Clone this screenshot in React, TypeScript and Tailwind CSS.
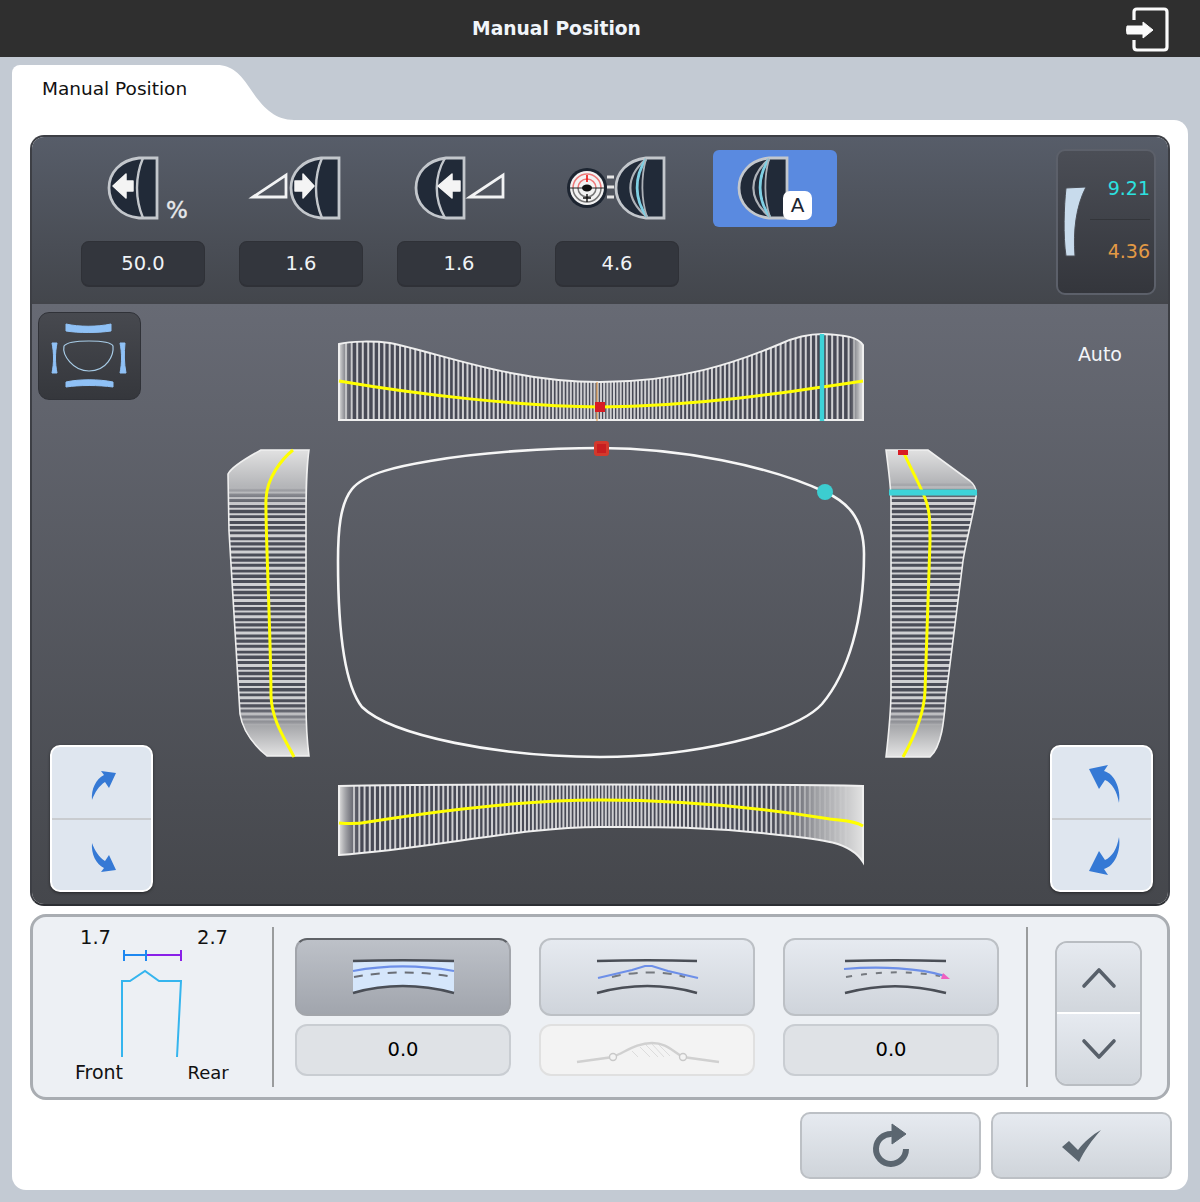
import React from "react";

// strip line positions, tighter near the middle of the lens
const topLines: number[] = [];
for (let x = 346; x < 860; x += 3.2 + 2.5 * (Math.abs(x - 600) / 260)) topLines.push(x);
const bottomLines: number[] = [];
for (let x = 354; x < 850; x += 3.4 + 2 * (Math.abs(x - 600) / 260)) bottomLines.push(x);
const sideLines: number[] = [];
for (let y = 470; y < 745; y += 5.4) sideLines.push(y);

const LensIcon = ({ x, arc = 35, bend = 8, cyan }: { x: number; arc?: number; bend?: number; cyan?: boolean }) => (
  <g transform={`translate(${x} 7)`}>
    <path d="M49 1 H31 C12 3 1 16 1 31 C1 46 12 59 31 61 H49 Z" fill="#212a38" stroke="#c3c7cc" strokeWidth="2.8" />
    {cyan ? (
      <>
        <path d="M31 2 C10 20 10 42 32 60" fill="none" stroke="#aeb2b8" strokeWidth="2.2" />
        <path d="M31 2 C19 20 19 42 32 60" fill="none" stroke="#7fd0e4" strokeWidth="2.8" />
        <path d="M31 2 C26 20 26 42 32 60" fill="none" stroke="#aeb2b8" strokeWidth="1.8" />
      </>
    ) : (
      <path d={`M${arc} 1 C${arc - bend} 20 ${arc - bend} 42 ${arc} 61`} fill="none" stroke="#c3c7cc" strokeWidth="2.4" />
    )}
  </g>
);

const WedgeIcon = ({ x }: { x: number }) => (
  <path d={`M${x + 1} 47 L${x + 34} 25 V47 Z`} fill="none" stroke="#f2f3f4" strokeWidth="2.8" strokeLinejoin="miter" />
);

const ValueBox = ({ value }: { value: string }) => (
  <div className="flex h-[46px] w-[124px] items-center justify-center rounded-[8px] border border-[#2f3137] border-b-2 bg-[#33363d] text-[19.5px] text-[#f0f3f6]">
    {value}
  </div>
);

const ToolColumn = ({ value, active, children }: { value?: string; active?: boolean; children: React.ReactNode }) => (
  <div className="flex w-[124px] flex-col gap-[14px]">
    <div className={`h-[77px] w-[124px] rounded-[6px] ${active ? "bg-[#5a8ae0]" : ""}`}>
      <svg width="124" height="77" viewBox="0 0 124 77">
        {children}
      </svg>
    </div>
    {value && <ValueBox value={value} />}
  </div>
);

const RotateButton = ({ top, flipSum }: { top: string; flipSum: number }) => (
  <div className="flex h-[147px] w-[103px] flex-col overflow-hidden rounded-[10px] border-2 border-white bg-[#dfe6ef] shadow-[0_1px_3px_rgba(0,0,0,0.5)]">
    <div className="flex-1 border-b-2 border-[#c9ccd0]">
      <svg width="99" height="71" viewBox="0 0 99 71">
        <path d={top} fill="#3579d5" />
      </svg>
    </div>
    <div className="flex-1">
      <svg width="99" height="71" viewBox="0 0 99 71">
        <g transform={`translate(0 ${flipSum}) scale(1 -1)`}>
          <path d={top} fill="#3579d5" />
        </g>
      </svg>
    </div>
  </div>
);

const LensDrawing = () => (
  <svg width="800" height="603" viewBox="200 303 800 603" className="shrink-0">
    <defs>
      <clipPath id="clipTop">
        <path d="M339 343 C350 340 375 340 390 342 C440 352 510 381 600 381 C680 381 735 362 780 343 C795 336 810 333 823 333 C845 334 858 336 863 344 V419 H339 Z" />
      </clipPath>
      <clipPath id="clipBottom">
        <path d="M339 785 C420 783 780 783 863 785 V861 C850 840 820 838 770 833 C700 825 650 826 600 826 C520 826 430 848 339 854 Z" />
      </clipPath>
      <clipPath id="clipLeft">
        <path d="M261 449 H309 C306 470 306 490 306 520 V700 C306 725 307 740 309 755 H267 C255 745 243 732 240 713 L229 530 L228 473 C232 465 250 455 261 449 Z" />
      </clipPath>
      <clipPath id="clipRight">
        <path d="M886 449 H928 L970 480 C975 484 977 490 976 496 C972 520 966 540 963 560 L946 695 C944 720 942 745 930 756 H886 C889 730 891 710 891 690 V500 C891 485 888 465 886 449 Z" />
      </clipPath>
      <linearGradient id="fadeTop" x1="0" y1="0" x2="0" y2="1">
        <stop offset="0" stopColor="#e6e6e6" />
        <stop offset="0.65" stopColor="#b4b5b8" />
        <stop offset="1" stopColor="#a0a1a6" stopOpacity="0" />
      </linearGradient>
      <linearGradient id="fadeBottom" x1="0" y1="1" x2="0" y2="0">
        <stop offset="0" stopColor="#e8e8e8" />
        <stop offset="0.6" stopColor="#a8a9ac" />
        <stop offset="1" stopColor="#a0a1a6" stopOpacity="0" />
      </linearGradient>
      <linearGradient id="fadeLeft" x1="0" y1="0" x2="1" y2="0">
        <stop offset="0" stopColor="#e0e0e0" />
        <stop offset="1" stopColor="#8d8e92" stopOpacity="0" />
      </linearGradient>
      <linearGradient id="fadeRight" x1="1" y1="0" x2="0" y2="0">
        <stop offset="0" stopColor="#e2e2e2" />
        <stop offset="0.5" stopColor="#a9aaad" stopOpacity="0.9" />
        <stop offset="1" stopColor="#8d8e92" stopOpacity="0" />
      </linearGradient>
    </defs>

    {/* top section */}
    <g clipPath="url(#clipTop)">
      <rect x="339" y="330" width="524" height="90" fill="#474955" />
      {topLines.map((x) => (
        <line key={x} x1={x} x2={x} y1="330" y2="420" stroke="#cfcfd2" strokeWidth="2" />
      ))}
      <rect x="339" y="330" width="14" height="90" fill="url(#fadeLeft)" />
      <rect x="850" y="330" width="13" height="90" fill="url(#fadeRight)" />
    </g>
    <path d="M339 343 C350 340 375 340 390 342 C440 352 510 381 600 381 C680 381 735 362 780 343 C795 336 810 333 823 333 C845 334 858 336 863 344 V419 H339 Z" fill="none" stroke="#efefef" strokeWidth="2" />
    <path d="M597 381 V420" stroke="#e8973f" strokeWidth="1" />
    <path d="M339 380 C420 394 520 405 600 406 C700 405 790 391 863 380" fill="none" stroke="#ffff00" strokeWidth="3" />
    <path d="M822 333 V420" stroke="#3ed3d8" strokeWidth="4.5" />
    <rect x="595" y="401" width="10" height="10" fill="#d81c24" />

    {/* bottom section */}
    <g clipPath="url(#clipBottom)">
      <rect x="339" y="780" width="524" height="85" fill="#474955" />
      {bottomLines.map((x) => (
        <line key={x} x1={x} x2={x} y1="780" y2="865" stroke="#cfcfd2" strokeWidth="2" />
      ))}
      <rect x="339" y="780" width="22" height="85" fill="url(#fadeLeft)" />
      <rect x="770" y="780" width="93" height="85" fill="url(#fadeRight)" />
    </g>
    <path d="M339 785 C420 783 780 783 863 785 V861 C850 840 820 838 770 833 C700 825 650 826 600 826 C520 826 430 848 339 854 Z" fill="none" stroke="#efefef" strokeWidth="2" />
    <path d="M339 822 C350 823 358 823 368 821 C450 808 530 799 600 799 C680 799 750 805 830 818 C845 820 855 820 863 825" fill="none" stroke="#ffff00" strokeWidth="3" />

    {/* left section */}
    <g clipPath="url(#clipLeft)">
      <rect x="225" y="445" width="90" height="315" fill="#4b4d58" />
      {sideLines.map((y, i) => (
        <line key={y} x1="225" x2="315" y1={y} y2={y} stroke="#cfcfd2" strokeWidth={i % 3 === 0 ? 3 : 2} />
      ))}
      <rect x="225" y="445" width="90" height="62" fill="url(#fadeTop)" />
      <rect x="225" y="704" width="90" height="54" fill="url(#fadeBottom)" />
    </g>
    <path d="M261 449 H309 C306 470 306 490 306 520 V700 C306 725 307 740 309 755 H267 C255 745 243 732 240 713 L229 530 L228 473 C232 465 250 455 261 449 Z" fill="none" stroke="#efefef" strokeWidth="1.6" />
    <path d="M293 449 C282 458 267 476 266 498 C265 520 271 640 271 695 C272 720 285 738 294 756" fill="none" stroke="#ffff00" strokeWidth="3" />

    {/* right section */}
    <g clipPath="url(#clipRight)">
      <rect x="884" y="445" width="96" height="315" fill="#4b4d58" />
      {sideLines.map((y, i) => (
        <line key={y} x1="884" x2="980" y1={y} y2={y} stroke="#cfcfd2" strokeWidth={i % 3 === 0 ? 3 : 2} />
      ))}
      <rect x="884" y="445" width="96" height="56" fill="url(#fadeTop)" />
      <rect x="884" y="704" width="96" height="54" fill="url(#fadeBottom)" />
    </g>
    <path d="M886 449 H928 L970 480 C975 484 977 490 976 496 C972 520 966 540 963 560 L946 695 C944 720 942 745 930 756 H886 C889 730 891 710 891 690 V500 C891 485 888 465 886 449 Z" fill="none" stroke="#efefef" strokeWidth="1.6" />
    <path d="M903 450 C910 466 920 484 925 497 C930 510 930 520 930 540 L925 690 C924 715 912 740 903 756" fill="none" stroke="#ffff00" strokeWidth="3" />
    <path d="M889 491.5 H977" stroke="#3ed3d8" strokeWidth="6" />
    <rect x="898" y="449" width="10" height="5" fill="#d81c24" />

    {/* lens outline */}
    <path
      d="M600 447 C680 447 770 465 825 491 C845 500 864 515 864 553 C864 620 848 672 822 703 C795 733 690 756 600 756 C500 756 392 735 362 706 C343 682 338 620 338 560 C338 530 340 503 352 488 C365 472 400 465 430 460 C480 451 550 447 600 447 Z"
      fill="none"
      stroke="#f6f6f6"
      strokeWidth="2.6"
    />
    <rect x="594" y="440" width="15" height="15" rx="3" fill="#d3392c" />
    <rect x="597" y="443" width="9" height="9" fill="#c81d20" />
    <circle cx="825" cy="491" r="8" fill="#3ccdd0" />
  </svg>
);

const CurveLines = ({ x0, children }: { x0: number; children?: React.ReactNode }) => (
  <svg width="212" height="74" viewBox={`${x0} 940 212 74`}>
    {children}
  </svg>
);

const ModeButton = ({ active, children }: { active?: boolean; children: React.ReactNode }) => (
  <div
    className={`flex h-[78px] w-[216px] items-center justify-center rounded-[12px] border-2 ${
      active
        ? "border-[#a2a5ab] border-t-[#5f6267] bg-gradient-to-b from-[#bdc1c8] to-[#a1a5ad]"
        : "border-[#bcc0c5] bg-gradient-to-b from-[#e6eaf0] to-[#cfd4db]"
    }`}
  >
    {children}
  </div>
);

const ReadBox = ({ value }: { value: string }) => (
  <div className="flex h-[52px] w-[216px] items-center justify-center rounded-[12px] border-2 border-[#c9cdd2] bg-[#dfe2e6] text-[19.5px] text-black">
    {value}
  </div>
);

const App = () => {
  return (
    <div className="flex h-[1202px] w-[1200px] flex-col overflow-hidden bg-[#c3cad3] font-['DejaVu_Sans',sans-serif]">
      <div className="relative flex h-[57px] shrink-0 items-center justify-center bg-[#2f2f2f] pr-[87px] pt-[2px] text-[18.7px] font-bold text-[#f1f5fa]">
        Manual Position
        <svg className="absolute right-[26px] top-[4px]" width="50" height="50" viewBox="1124 4 50 50">
          <path d="M1134 20 V12 Q1134 9 1137 9 H1164 Q1167 9 1167 12 V47 Q1167 50 1164 50 H1137 Q1134 50 1134 47 V40" fill="none" stroke="#fbfbfb" strokeWidth="3.2" />
          <path d="M1127 26 H1143 V22 L1153 30 L1143 38 V34 H1127 Q1126 30 1127 26 Z" fill="#fbfbfb" stroke="#fbfbfb" strokeWidth="1" strokeLinejoin="round" />
        </svg>
      </div>

      <div className="ml-[12px] mt-[8px] flex h-[55px] shrink-0">
        <div className="w-[206px] rounded-tl-[8px] bg-white pl-[30px] pt-[10px] text-[18.5px] text-[#111]">Manual Position</div>
        <svg width="77" height="55" viewBox="0 0 77 55" className="-ml-px">
          <path d="M0 0 C15 0 24 10 32 22 C44 40 56 55 77 55 H0 Z" fill="#fff" />
        </svg>
      </div>

      <div className="ml-[12px] flex h-[1070px] w-[1176px] flex-col rounded-b-[14px] rounded-tr-[14px] bg-white px-[18px] pt-[15px]">
        <div className="flex h-[771px] shrink-0 flex-col overflow-hidden rounded-[14px] border-2 border-[#3d3f45] border-b-[#2c2e33]">
          {/* toolbar */}
          <div className="flex h-[167px] shrink-0 items-start border-b-2 border-[#43454b] bg-gradient-to-b from-[#575d69] to-[#43464c] pl-[49px] pt-[13px]">
            <div className="flex gap-[34px]">
              <ToolColumn value="50.0">
                <LensIcon x={27} />
                <path d="M32 36 L45 24 V31 H52 V41 H45 V48 Z" fill="#f4f4f4" stroke="#f4f4f4" strokeWidth="1.5" strokeLinejoin="round" />
                <text x="85" y="68" fontSize="23" fill="#e6e8ea" stroke="#e6e8ea" strokeWidth="0.4">%</text>
              </ToolColumn>
              <ToolColumn value="1.6">
                <WedgeIcon x={13} />
                <LensIcon x={51} arc={32} />
                <path d="M75 36 L64 24 V31 H56 V41 H64 V48 Z" fill="#f4f4f4" stroke="#f4f4f4" strokeWidth="1.5" strokeLinejoin="round" />
              </ToolColumn>
              <ToolColumn value="1.6">
                <LensIcon x={18} arc={30} bend={11} />
                <path d="M41 36 L55 24 V31 H63 V41 H55 V48 Z" fill="#f4f4f4" stroke="#f4f4f4" strokeWidth="1.5" strokeLinejoin="round" />
                <WedgeIcon x={72} />
              </ToolColumn>
              <ToolColumn value="4.6">
                <circle cx="32" cy="38" r="20" fill="#1d2531" />
                <circle cx="32" cy="38" r="17" fill="#f3f3f3" />
                <path d="M18 38 A14 14 0 0 1 46 38" fill="none" stroke="#ee7b7b" strokeWidth="1.5" />
                <path d="M23 38 A9 9 0 0 1 41 38" fill="none" stroke="#ee7b7b" strokeWidth="1.5" />
                <path d="M18 38 A14 14 0 0 0 46 38 M23 38 A9 9 0 0 0 41 38" fill="none" stroke="#777" strokeWidth="1.5" />
                <path d="M15 38 H49" stroke="#222" strokeWidth="1.2" />
                <path d="M32 25 V32" stroke="#e11" strokeWidth="1.6" />
                <path d="M32 44 V52 M28 48 H36" stroke="#111" strokeWidth="1.4" />
                <ellipse cx="32" cy="38" rx="5" ry="3.4" fill="#111" />
                <path d="M52 27 H59 M52 37 H59 M52 47 H59" stroke="#e5e5e5" strokeWidth="3" />
                <LensIcon x={60} cyan />
              </ToolColumn>
              <ToolColumn active>
                <LensIcon x={25} cyan />
                <rect x="70" y="41" width="29" height="29" rx="7" fill="#fff" />
                <text x="84.5" y="62" fontSize="20" textAnchor="middle" fill="#1b2430">A</text>
              </ToolColumn>
            </div>
            <div className="ml-auto mr-[12px] -mt-px flex h-[146px] w-[100px] rounded-[9px] border-2 border-[#5c606a] bg-gradient-to-b from-[#4b4e56] to-[#34363c]">
              <svg width="32" height="142" viewBox="1058 150 32 142" className="shrink-0">
                <path d="M1066 187 L1086 186 C1076 205 1073 230 1075 255 L1066 255 C1063 235 1064 205 1066 187 Z" fill="#c8dbec" stroke="#4a4d55" strokeWidth="1" />
              </svg>
              <div className="flex flex-1 flex-col pr-[4px] text-right text-[19px]">
                <div className="flex h-[69px] items-end justify-end border-b border-[#33353a] pb-[17px] text-[#2ce2e0]">9.21</div>
                <div className="flex h-[45px] items-end justify-end text-[#e39a45]">4.36</div>
              </div>
            </div>
          </div>

          {/* lens sections */}
          <div className="flex h-[600px] shrink-0 bg-gradient-to-b from-[#676a74] to-[#45474c]">
            <div className="flex w-[168px] shrink-0 flex-col items-start justify-between pb-[12px] pl-[6px] pt-[8px]">
              <div className="h-[88px] w-[103px] rounded-[11px] border border-[#303238] bg-gradient-to-b from-[#47494f] to-[#35373c]">
                <svg width="101" height="86" viewBox="0 0 101 86">
                  <path d="M27 11 C40 14 58 14 72 11 V18 C58 20 40 20 27 18 Z" fill="#8fc1f6" stroke="#8fc1f6" strokeWidth="1" />
                  <path d="M27 69 C40 66 60 66 74 69 V74 C60 72 40 72 27 74 Z" fill="#8fc1f6" stroke="#8fc1f6" strokeWidth="1" />
                  <path d="M13 30 H18 C16 40 16 50 18 60 H13 C15 50 15 40 13 30 Z" fill="#8fc1f6" stroke="#8fc1f6" strokeWidth="1" />
                  <path d="M81 30 H86 C85 40 85 50 87 60 H81 C83 50 83 40 81 30 Z" fill="#8fc1f6" stroke="#8fc1f6" strokeWidth="1" />
                  <path d="M25 33 C28 29 40 28 50 28 C62 28 72 29 74 33 C75 42 68 58 50 58 C34 58 23 42 25 33 Z" fill="none" stroke="#a7cbe6" strokeWidth="1.2" />
                </svg>
              </div>
              <div className="ml-[12px]">
                <RotateButton top="M40 53 C39 42 44 32 52 28 L49 24 L64 26 L57 41 L53 35 C47 39 43 45 40 53 Z" flipSum={76} />
              </div>
            </div>
            <LensDrawing />
            <div className="flex flex-1 flex-col items-end justify-between pb-[12px] pr-[15px] pt-[36px]">
              <div className="mr-[31px] text-[19px] text-[#f3f5f8]">Auto</div>
              <RotateButton top="M67 56 C65 44 60 36 53 33 L47 42 L37 22 L56 18 L52 24 C63 27 69 42 67 56 Z" flipSum={73} />
            </div>
          </div>
        </div>

        {/* adjustment row */}
        <div className="mt-[8px] flex h-[186px] shrink-0 rounded-[16px] border-[3px] border-[#a9adb2] bg-[#edf0f4]">
          <svg width="239" height="180" viewBox="33 917 239 180" className="shrink-0">
            <text x="80" y="944" fontSize="19.5" fill="#111">1.7</text>
            <text x="197" y="944" fontSize="19.5" fill="#111">2.7</text>
            <path d="M124 955 H146" stroke="#1e88f0" strokeWidth="2" />
            <path d="M146 955 H181" stroke="#8a20e8" strokeWidth="2" />
            <path d="M124 950 V961 M146 950 V961" stroke="#1e88f0" strokeWidth="2" />
            <path d="M181 950 V961" stroke="#8a20e8" strokeWidth="2" />
            <path d="M122 1057 V981 H130 L145 971 L159 981 H181 L177 1057" fill="none" stroke="#35b5ee" strokeWidth="2" />
            <text x="75" y="1079" fontSize="19" fill="#111">Front</text>
            <text x="187.5" y="1079" fontSize="18" fill="#111">Rear</text>
          </svg>
          <div className="mt-[10px] h-[160px] w-[2px] shrink-0 bg-[#9a9c9d]" />
          <div className="ml-[21px] mt-[21px] grid h-[138px] grid-cols-[216px_216px_216px] gap-x-[28px] gap-y-[8px]">
            <ModeButton active>
              <CurveLines x0={297}>
                <path d="M353 961 C385 960 420 960 454 961 V993 C420 984 385 984 353 993 Z" fill="#d5e6fb" />
                <path d="M353 961 C385 960 420 960 454 961" fill="none" stroke="#4a4e56" strokeWidth="2.5" />
                <path d="M353 993 C385 984 420 984 454 993" fill="none" stroke="#4a4e56" strokeWidth="2.5" />
                <path d="M353 971 C385 965 420 965 454 971" fill="none" stroke="#6d8fe8" strokeWidth="2.2" />
                <path d="M354 977 C385 971 420 971 454 977" fill="none" stroke="#6a6e76" strokeWidth="2" strokeDasharray="9 8" />
              </CurveLines>
            </ModeButton>
            <ModeButton>
              <CurveLines x0={541}>
                <path d="M597 961 C630 960 665 960 697 961" fill="none" stroke="#4a4e56" strokeWidth="2.5" />
                <path d="M597 993 C630 984 665 984 697 993" fill="none" stroke="#4a4e56" strokeWidth="2.5" />
                <path d="M612 977 C635 971 665 971 685 977" fill="none" stroke="#75797f" strokeWidth="2" strokeDasharray="9 8" />
                <path d="M598 978 L632 970 L645 966 H652 L668 971 L698 978" fill="none" stroke="#6d8fe8" strokeWidth="2.2" />
              </CurveLines>
            </ModeButton>
            <ModeButton>
              <CurveLines x0={785}>
                <path d="M845 961 C880 960 910 960 946 961" fill="none" stroke="#4a4e56" strokeWidth="2.5" />
                <path d="M845 993 C880 984 910 984 946 993" fill="none" stroke="#4a4e56" strokeWidth="2.5" />
                <path d="M846 977 C880 971 910 971 940 976" fill="none" stroke="#75797f" strokeWidth="2" strokeDasharray="6 9" />
                <path d="M844 969 C880 966 920 968 945 976" fill="none" stroke="#6d8fe8" strokeWidth="2.2" />
                <path d="M943 973 L950 979 H941 Z" fill="#f060c0" />
              </CurveLines>
            </ModeButton>
            <ReadBox value="0.0" />
            <div className="flex h-[52px] w-[216px] items-center justify-center rounded-[12px] border-2 border-[#e0e0e0] bg-[#f3f3f3]">
              <svg width="150" height="30" viewBox="0 0 150 30">
                <path d="M68 12 L78 22 M74 10 L86 22 M80 9 L92 22 M86 9 L98 21 M60 16 L66 22" stroke="#dcdcdc" strokeWidth="1" />
                <path d="M5 27 L41 22 C55 16 65 8 80 8 C95 8 100 16 111 22 L147 27" fill="none" stroke="#d0d0d0" strokeWidth="2.4" />
                <circle cx="41" cy="22" r="3.5" fill="#f3f3f3" stroke="#c8c8c8" strokeWidth="1.4" />
                <circle cx="111" cy="22" r="3.5" fill="#f3f3f3" stroke="#c8c8c8" strokeWidth="1.4" />
              </svg>
            </div>
            <ReadBox value="0.0" />
          </div>
          <div className="ml-[27px] mt-[10px] h-[160px] w-[2px] shrink-0 bg-[#9a9c9d]" />
          <div className="ml-[27px] mt-[24px] flex h-[145px] w-[87px] flex-col overflow-hidden rounded-[12px] border-2 border-[#b9bdc2]">
            <div className="flex h-[71px] items-center justify-center border-b-2 border-white bg-gradient-to-b from-[#e6eaf0] to-[#d1d6dc]">
              <svg width="36" height="26" viewBox="0 0 36 26">
                <path d="M3 21 L18 5 L33 21" fill="none" stroke="#58606a" strokeWidth="3.6" strokeLinecap="round" strokeLinejoin="round" />
              </svg>
            </div>
            <div className="flex flex-1 items-center justify-center bg-gradient-to-b from-[#e6eaf0] to-[#d1d6dc]">
              <svg width="36" height="26" viewBox="0 0 36 26">
                <path d="M3 5 L18 21 L33 5" fill="none" stroke="#58606a" strokeWidth="3.6" strokeLinecap="round" strokeLinejoin="round" />
              </svg>
            </div>
          </div>
        </div>

        {/* footer actions */}
        <div className="-mr-[2px] mt-[12px] flex justify-end gap-[10px]">
          <button className="flex h-[67px] w-[181px] items-center justify-center rounded-[10px] border-2 border-[#bcc0c5] bg-gradient-to-b from-[#e6eaf0] to-[#cfd4da]">
            <svg width="46" height="50" viewBox="868 1122 46 50">
              <path d="M906 1150 A15 15 0 1 1 892 1135" fill="none" stroke="#5b6670" strokeWidth="6" />
              <path d="M892 1125 L906 1135 L892 1145 Z" fill="#5b6670" stroke="#5b6670" strokeWidth="1" />
            </svg>
          </button>
          <button className="flex h-[67px] w-[181px] items-center justify-center rounded-[10px] border-2 border-[#bcc0c5] bg-gradient-to-b from-[#e6eaf0] to-[#cfd4da]">
            <svg width="44" height="38" viewBox="1062 1127 44 38">
              <path d="M1064 1147 L1071 1141 L1080 1150 C1086 1142 1094 1135 1103 1130 C1094 1140 1086 1151 1081 1162 Z" fill="#5b6670" />
            </svg>
          </button>
        </div>
      </div>
    </div>
  );
};

export default App;
